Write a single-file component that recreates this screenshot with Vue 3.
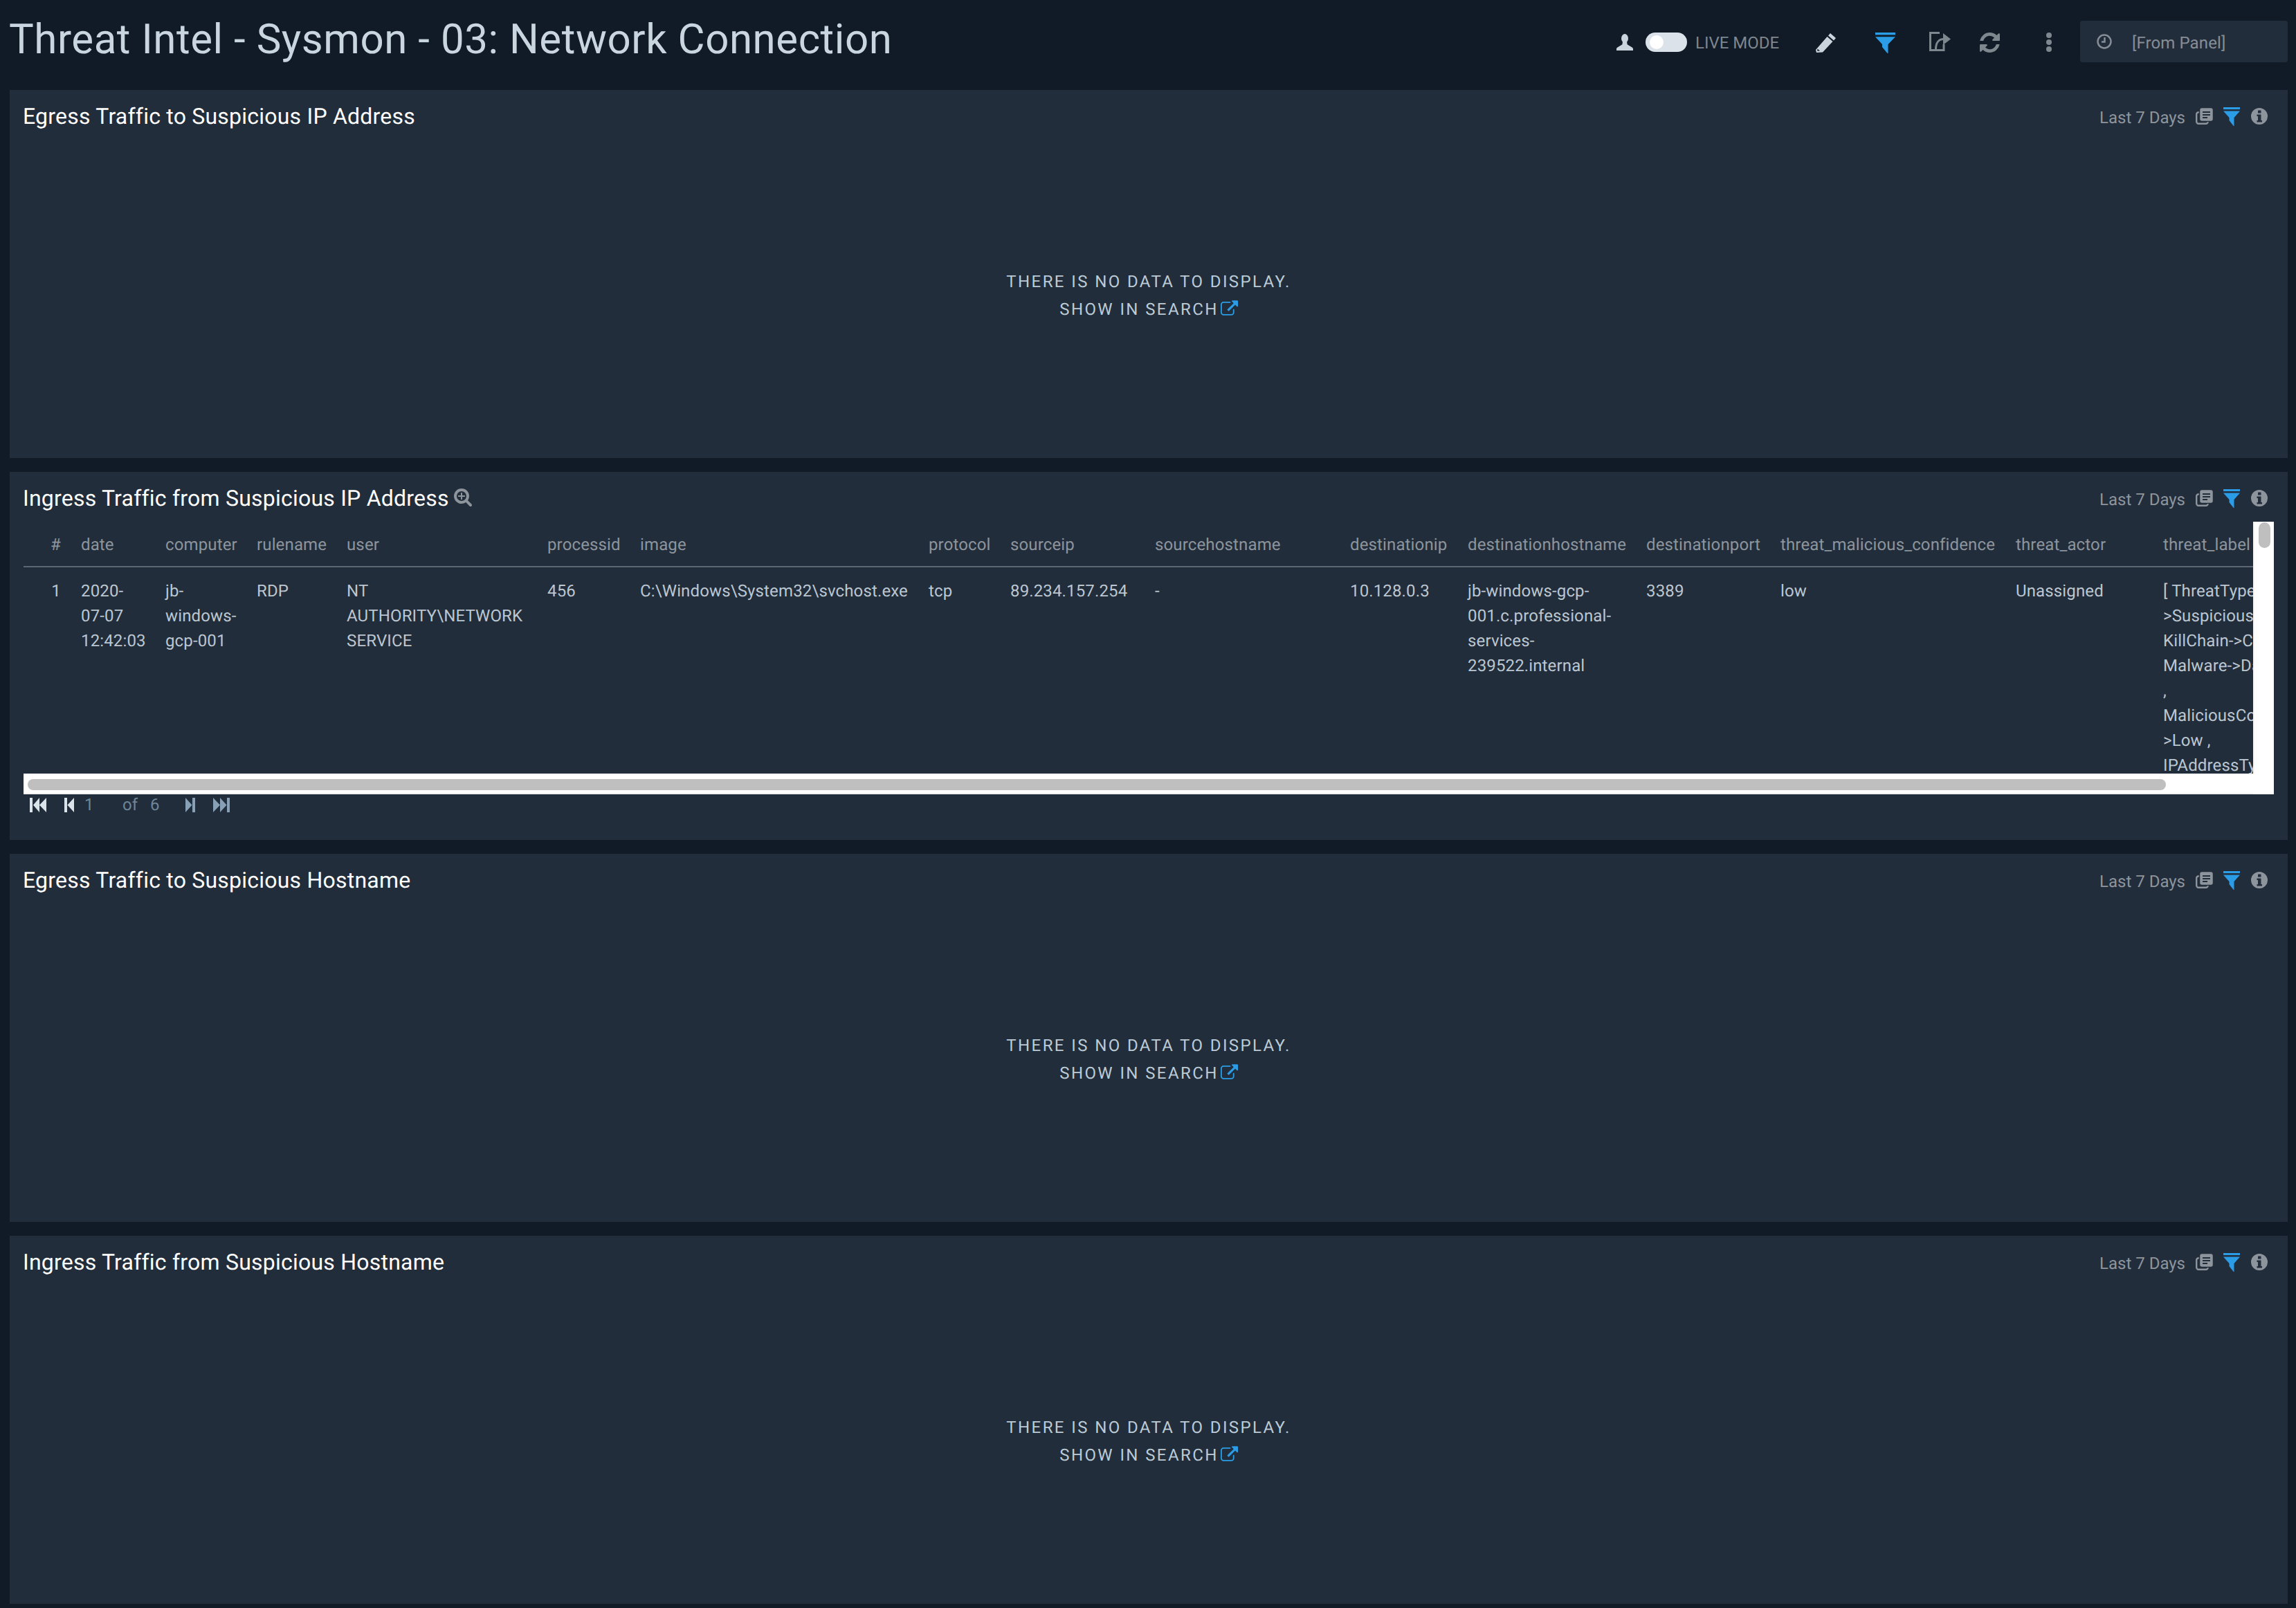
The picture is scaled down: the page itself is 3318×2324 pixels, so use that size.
<template>
  <div class="page">
    <header class="topbar">
      <h1 class="page-title">Threat Intel - Sysmon - 03: Network Connection</h1>
      <div class="tools">
        <svg class="ic-user" viewBox="0 0 24 24">
          <ellipse cx="12" cy="6.5" rx="5" ry="6.5" />
          <path d="M9 11h6l.6 4.2 7 4.3c.9.6 1.4 1.4 1.4 2.5v2H0v-2c0-1.100.5-1.900 1.400-2.500l7-4.300z" />
        </svg>
        <span class="toggle"><span class="knob"></span></span>
        <span class="live">LIVE MODE</span>
        <svg class="ic-pencil" viewBox="0 0 29 28">
          <path d="M21 0l8 7-3 3.500-8-7zM16.500 5l8 7L10 27.500 1 28 0 24z" />
          <path class="cut" d="M2.500 22.500l3.500 3-3.800.3z" />
        </svg>
        <svg class="ic-filter" viewBox="0 0 29 30">
          <rect width="29" height="3.400" />
          <path d="M0 6.200h29L18.500 17v13h-1L10 21V17z" />
        </svg>
        <svg class="ic-share" viewBox="0 0 31 28">
          <path d="M15 1.500H1.500v25H21V18" />
          <path d="M9.500 25c0-9 4-14.500 11.500-14.500" />
          <polygon points="20,2 31,10.500 20,19" />
        </svg>
        <svg class="ic-refresh" viewBox="0 0 1536 1536">
          <path d="M1511 928q0 5-1 7-64 268-268 434.500t-478 166.500q-146 0-282.500-55t-243.500-157l-129 129q-19 19-45 19t-45-19-19-45v-448q0-26 19-45t45-19h448q26 0 45 19t19 45-19 45l-137 137q71 66 161 102t187 36q134 0 250-65t186-179q11-17 53-117 8-23 30-23h192q13 0 22.500 9.500t9.500 22.500zm25-800v448q0 26-19 45t-45 19h-448q-26 0-45-19t-19-45 19-45l138-138q-148-137-349-137-134 0-250 65t-186 179q-11 17-53 117-8 23-30 23h-199q-13 0-22.500-9.500t-9.500-22.500v-7q65-268 270-434.500t480-166.500q146 0 284 55.500t245 156.500l130-129q19-19 45-19t45 19 19 45z" />
        </svg>
        <svg class="ic-dots" viewBox="0 0 12 28">
          <circle cx="6" cy="4" r="4" />
          <circle cx="6" cy="14" r="4" />
          <circle cx="6" cy="24" r="4" />
        </svg>
        <div class="range">
          <svg class="ic-clock" viewBox="0 0 22 22">
            <circle cx="11" cy="11" r="9.500" />
            <path d="M11.500 5v6.500H7" />
          </svg>
          <span>[From Panel]</span>
        </div>
      </div>
    </header>

    <section v-for="panel in panels" :key="panel.title" class="panel">
      <div class="panel-head">
        <h2 class="panel-title">{{ panel.title }}</h2>
        <svg v-if="panel.rows" class="ic-zoom" viewBox="0 128 1664 1664">
          <path d="M1024 800v64q0 13-9.500 22.500t-22.500 9.500h-224v224q0 13-9.500 22.500t-22.500 9.500h-64q-13 0-22.500-9.500t-9.500-22.500v-224h-224q-13 0-22.500-9.500t-9.500-22.500v-64q0-13 9.500-22.500t22.500-9.500h224v-224q0-13 9.500-22.500t22.500-9.500h64q13 0 22.500 9.500t9.500 22.500v224h224q13 0 22.500 9.500t9.500 22.500zm128 32q0-185-131.500-316.500t-316.500-131.500-316.500 131.500-131.500 316.500 131.500 316.500 316.500 131.500 316.500-131.500 131.500-316.500zm512 832q0 53-37.500 90.500t-90.500 37.500q-54 0-90-38l-343-342q-179 124-399 124-143 0-273.500-55.500t-225-150-150-225-55.500-273.500 55.500-273.500 150-225 225-150 273.500-55.500 273.500 55.500 225 150 150 225 55.500 273.500q0 220-124 399l343 343q37 37 37 90z" />
        </svg>
        <div class="panel-meta">
          <span>Last 7 Days</span>
          <svg class="ic-copy" viewBox="0 0 25 24">
            <rect x="1.200" y="6.200" width="16.600" height="16.600" rx="3" />
            <rect class="front" x="5.500" y="-.5" width="20" height="20" rx="3.500" />
            <path class="lines" d="M10 6h11M10 10h11M10 14h7" />
          </svg>
          <svg class="ic-filter-sm" viewBox="0 0 24 27">
            <rect width="24" height="3" />
            <path d="M0 5.500h24L15.500 15v12h-.8L8.500 19v-4z" />
          </svg>
          <svg class="ic-info" viewBox="0 0 24 24">
            <path fill-rule="evenodd" d="M12 0a12 12 0 1 1 0 24 12 12 0 0 1 0-24zM10 3.500v4h4.500v-4zM8.500 9.500v2.500H10v6H8.500v2.500h7.500V18h-1.500V9.500z" />
          </svg>
        </div>
      </div>

      <template v-if="panel.rows">
        <div class="scroller">
          <div class="viewport">
            <table class="grid">
              <colgroup>
                <col v-for="col in columns" :key="col.name" :style="{ width: col.width + 'px' }" />
              </colgroup>
              <thead>
                <tr>
                  <th v-for="col in columns" :key="col.name" :class="{ idx: col.name === '#' }">{{ col.name }}</th>
                </tr>
              </thead>
              <tbody>
                <tr v-for="(row, i) in panel.rows" :key="i">
                  <td v-for="(cell, c) in row" :key="c" :class="{ idx: c === 0 }">{{ cell }}</td>
                </tr>
              </tbody>
            </table>
          </div>
          <div class="vbar"><span class="thumb"></span></div>
          <div class="hbar"><span class="thumb"></span></div>
          <div class="corner"></div>
        </div>
        <div class="pager">
          <svg class="pg on first" viewBox="0 0 24 21"><path d="M0 0h4v21H0zM5 10.500L14 0v21zM14 10.500L24 0v21z" /></svg>
          <svg class="pg on prev" viewBox="0 0 14 21"><path d="M0 0h4v21H0zM4.500 10.500L14 0v21z" /></svg>
          <span class="pg-cur">1</span>
          <span class="pg-of">of</span>
          <span class="pg-total">6</span>
          <svg class="pg next" viewBox="0 0 14 21"><path d="M0 0l9.500 10.500L0 21zM10 0h4v21h-4z" /></svg>
          <svg class="pg last" viewBox="0 0 24 21"><path d="M0 0l10 10.500L0 21zM10 0l9.500 10.500L10 21zM20 0h4v21h-4z" /></svg>
        </div>
      </template>

      <div v-else class="empty">
        <p>THERE IS NO DATA TO DISPLAY.</p>
        <p class="show">
          SHOW IN SEARCH
          <svg class="ic-ext" viewBox="0 0 1792 1536">
            <path d="M1408 928v320q0 119-84.500 203.500t-203.500 84.500h-832q-119 0-203.500-84.500t-84.500-203.500v-832q0-119 84.500-203.500t203.500-84.500h704q14 0 23 9t9 23v64q0 14-9 23t-23 9h-704q-66 0-113 47t-47 113v832q0 66 47 113t113 47h832q66 0 113-47t47-113v-320q0-14 9-23t23-9h64q14 0 23 9t9 23zm384-864v512q0 26-19 45t-45 19-45-19l-176-176-652 652q-10 10-23 10t-23-10l-114-114q-10-10-10-23t10-23l652-652-176-176q-19-19-19-45t19-45 45-19h512q26 0 45 19t19 45z" />
          </svg>
        </p>
      </div>
    </section>
  </div>
</template>

<script setup>
const columns = [
  { name: '#', width: 69 },
  { name: 'date', width: 122 },
  { name: 'computer', width: 132 },
  { name: 'rulename', width: 130 },
  { name: 'user', width: 290 },
  { name: 'processid', width: 134 },
  { name: 'image', width: 417 },
  { name: 'protocol', width: 118 },
  { name: 'sourceip', width: 209 },
  { name: 'sourcehostname', width: 282 },
  { name: 'destinationip', width: 170 },
  { name: 'destinationhostname', width: 258 },
  { name: 'destinationport', width: 194 },
  { name: 'threat_malicious_confidence', width: 340 },
  { name: 'threat_actor', width: 213 },
  { name: 'threat_label', width: 276 }
]

const rows = [
  [
    '1',
    '2020-\n07-07\n12:42:03',
    'jb-\nwindows-\ngcp-001',
    'RDP',
    'NT\nAUTHORITY\\NETWORK\nSERVICE',
    '456',
    'C:\\Windows\\System32\\svchost.exe',
    'tcp',
    '89.234.157.254',
    '-',
    '10.128.0.3',
    'jb-windows-gcp-\n001.c.professional-\nservices-\n239522.internal',
    '3389',
    'low',
    'Unassigned',
    '[ ThreatType-\n>SuspiciousIP ,\nKillChain->C2 ,\nMalware->DarkComet\n,\nMaliciousConfidence-\n>Low ,\nIPAddressType-\n>IPv4 ]'
  ]
]

const panels = [
  { title: 'Egress Traffic to Suspicious IP Address' },
  { title: 'Ingress Traffic from Suspicious IP Address', rows },
  { title: 'Egress Traffic to Suspicious Hostname' },
  { title: 'Ingress Traffic from Suspicious Hostname' }
]
</script>

<style>
body {
  background: #101b27;
}
</style>

<style scoped>
.page {
  width: 3318px;
  height: 2324px;
  overflow: hidden;
  background: #101b27;
  font-family: Roboto, sans-serif;
  font-size: 24px;
  text-rendering: geometricPrecision;
}

.topbar {
  height: 130px;
  display: flex;
  align-items: flex-start;
  justify-content: space-between;
  padding: 0 12px 0 13px;
  box-sizing: border-box;
}
.page-title {
  margin: 22px 0 0;
  font-size: 60px;
  line-height: 70px;
  font-weight: 400;
  letter-spacing: .55px;
  color: #c9d6df;
}
.tools {
  display: flex;
  align-items: center;
  height: 60px;
  margin-top: 30px;
  color: #7e868e;
}
.tools svg {
  display: block;
  flex: none;
}
.ic-user {
  width: 24px;
  height: 24px;
  fill: #c9d4dc;
  margin: 1px 18px 0 0;
}
.toggle {
  width: 60px;
  height: 28px;
  border-radius: 14px;
  background: #dbe2e9;
  margin-top: 2px;
  display: flex;
  align-items: center;
  padding-left: 6px;
  box-sizing: border-box;
}
.knob {
  width: 20px;
  height: 20px;
  border-radius: 50%;
  background: #fff;
}
.live {
  margin-left: 12px;
  width: 174px;
  flex: none;
  margin-top: 4px;
}
.ic-pencil {
  width: 29px;
  height: 28px;
  fill: #c9d4dc;
  margin-top: 4px;
}
.ic-pencil .cut {
  fill: #101b27;
}
.ic-filter {
  width: 29px;
  height: 30px;
  fill: #2a9de6;
  margin: 3px 0 0 57px;
}
.ic-share {
  width: 31px;
  height: 28px;
  margin: 0 0 0 49px;
  fill: #7e868e;
}
.ic-share path {
  fill: none;
  stroke: #7e868e;
  stroke-width: 3;
}
.ic-refresh {
  width: 29px;
  height: 29px;
  fill: #7e868e;
  margin: 2px 0 0 42px;
}
.ic-dots {
  width: 12px;
  height: 28px;
  fill: #7e868e;
  margin: 2px 0 0 65px;
}
.range {
  width: 300px;
  height: 60px;
  margin-left: 39px;
  border-radius: 4px;
  background: #212d3b;
  display: flex;
  align-items: center;
  padding: 4px 0 0 24px;
  box-sizing: border-box;
  letter-spacing: .1px;
  color: #868d96;
}
.ic-clock {
  width: 22px;
  height: 22px;
  margin: -4px 29px 0 0;
  fill: none;
  stroke: #868d96;
  stroke-width: 2.500;
}

.panel {
  width: 3292px;
  height: 532px;
  margin: 0 0 20px 14px;
  background: #212d3b;
  padding: 0 20px;
  box-sizing: border-box;
  display: flex;
  flex-direction: column;
}
.panel-head {
  height: 72px;
  flex: none;
  display: flex;
  align-items: flex-start;
}
.panel-title {
  margin: 19px 0 0 -1px;
  font-size: 32px;
  line-height: 38px;
  font-weight: 400;
  letter-spacing: .22px;
  color: #fff;
}
.ic-zoom {
  width: 26px;
  height: 26px;
  fill: #8d949c;
  margin: 24px 0 0 7px;
}
.panel-meta {
  margin: 24px 9px 0 auto;
  display: flex;
  align-items: flex-start;
  line-height: 32px;
  color: #8d949c;
}
.panel-meta svg {
  display: block;
  flex: none;
}
.ic-copy {
  width: 25px;
  height: 24px;
  margin: 2px 0 0 15px;
}
.ic-copy rect {
  fill: none;
  stroke: #8d949c;
  stroke-width: 2.400;
}
.ic-copy .front {
  fill: #8d949c;
  stroke: #212d3b;
  stroke-width: 1.500;
}
.ic-copy .lines {
  fill: none;
  stroke: #212d3b;
  stroke-width: 2;
}
.ic-filter-sm {
  width: 24px;
  height: 27px;
  fill: #2a9de6;
  margin: 1px 0 0 15px;
}
.ic-info {
  width: 24px;
  height: 24px;
  fill: #8d949c;
  margin: 2px 0 0 16px;
}

.empty {
  flex: 1;
  display: flex;
  flex-direction: column;
  align-items: center;
  justify-content: center;
  padding-bottom: 10px;
  color: #bccad6;
  letter-spacing: 2.4px;
  line-height: 40px;
}
.empty p {
  margin: 0;
}
.show {
  display: flex;
  align-items: center;
}
.ic-ext {
  width: 25px;
  height: 22px;
  fill: #2a9de6;
  margin: -4px 0 0 3px;
}

.scroller {
  width: 3252px;
  height: 394px;
  flex: none;
  display: grid;
  grid-template-columns: 3222px 30px;
  grid-template-rows: 364px 30px;
}
.viewport {
  overflow: hidden;
}
.vbar,
.hbar,
.corner {
  background: #fff;
  box-sizing: border-box;
}
.vbar {
  border-left: 2px solid #f5f5f5;
  padding: 1px 5px 0 6px;
}
.hbar {
  border-top: 2px solid #f7f7f7;
  border-bottom: 2px solid #f1f1f1;
  padding: 6px 0 4px 6px;
}
.thumb {
  display: block;
  background: #bfbfbf;
  border-radius: 9px;
}
.vbar .thumb {
  height: 37px;
}
.hbar .thumb {
  width: 3090px;
  height: 16px;
}
.grid {
  border-collapse: collapse;
  table-layout: fixed;
  width: 3354px;
  letter-spacing: .14px;
}
th {
  height: 65px;
  box-sizing: border-box;
  padding: 2px 14px 0;
  text-align: left;
  font-weight: 400;
  white-space: nowrap;
  color: #8d949c;
  border-bottom: 2px solid #5d6772;
}
td {
  padding: 16px 14px 0;
  vertical-align: top;
  line-height: 36px;
  white-space: pre-line;
  overflow: hidden;
  color: #bcc6d0;
}
th.idx,
td.idx {
  text-align: right;
  padding-right: 15px;
  padding-left: 0;
}

.pager {
  display: flex;
  align-items: center;
  height: 30px;
  padding-left: 9px;
  color: #6e8598;
}
.pg {
  display: block;
  flex: none;
  height: 21px;
  fill: #87a0b5;
}
.pg.on {
  fill: #dbe3ea;
}
.first,
.last {
  width: 24px;
}
.prev,
.next {
  width: 14px;
}
.prev {
  margin-left: 26px;
}
.pg-cur {
  margin-left: 15px;
  width: 55px;
}
.pg-of {
  width: 40px;
}
.pg-total {
  width: 51px;
}
.next {
  margin-right: 26px;
}
</style>
